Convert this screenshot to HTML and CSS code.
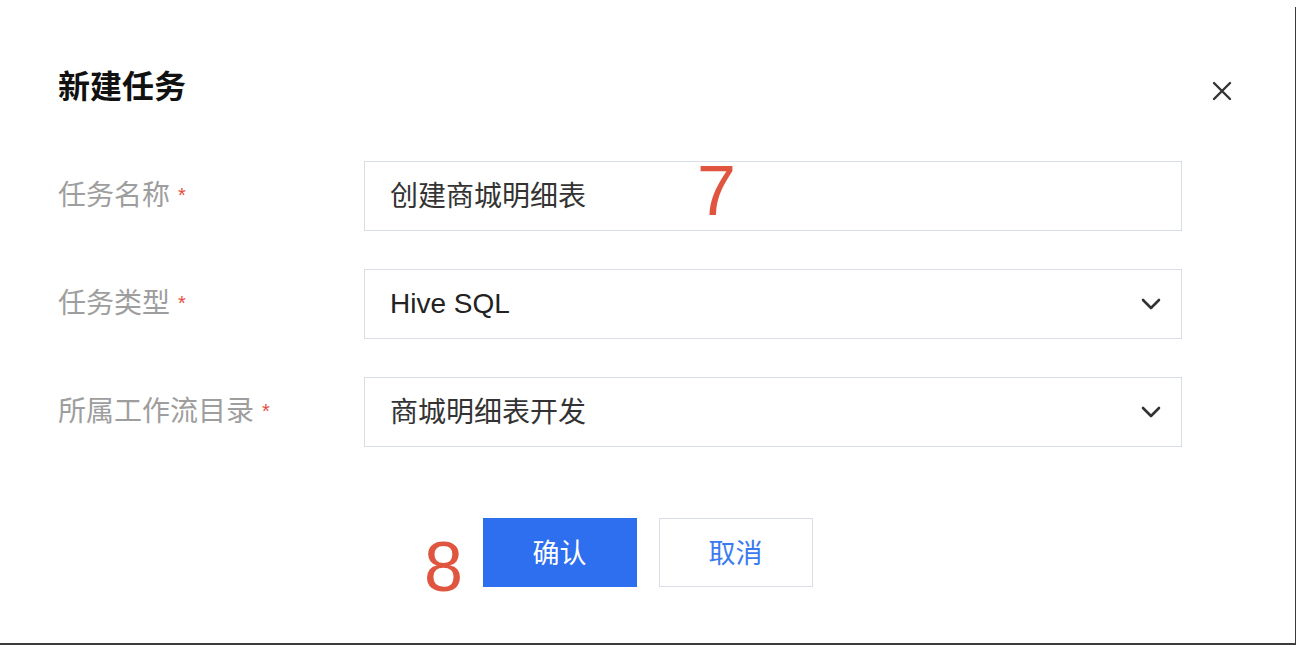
FILE: index.html
```html
<!DOCTYPE html>
<html lang="zh-CN">
<head>
    <meta charset="UTF-8">
    <meta name="viewport" content="width=device-width, initial-scale=1.0">
    <title>新建任务</title>
    <link rel="stylesheet" href="styles.css">
</head>
<body>
    <div class="frame">
        <div class="dialog-header">
            <h2 class="dialog-title">新建任务</h2>
            <svg class="close-icon" width="20" height="20" viewBox="0 0 20 20">
                <path d="M2 2 L18 18 M18 2 L2 18" stroke="#333" stroke-width="2.4" stroke-linecap="round" fill="none"/>
            </svg>
        </div>
        <form class="task-form">
            <div class="form-row">
                <label class="form-label">任务名称<span class="required">*</span></label>
                <div class="field">
                    <span class="field-value">创建商城明细表</span>
                    <span class="mark mark-seven">7</span>
                </div>
            </div>
            <div class="form-row">
                <label class="form-label">任务类型<span class="required">*</span></label>
                <div class="field">
                    <span class="field-value latin">Hive SQL</span>
                    <svg class="chevron" width="20" height="12" viewBox="0 0 20 12">
                        <path d="M2 2 L10 10 L18 2" stroke="#333" stroke-width="2.6" stroke-linecap="round" stroke-linejoin="round" fill="none"/>
                    </svg>
                </div>
            </div>
            <div class="form-row">
                <label class="form-label">所属工作流目录<span class="required">*</span></label>
                <div class="field">
                    <span class="field-value">商城明细表开发</span>
                    <svg class="chevron" width="20" height="12" viewBox="0 0 20 12">
                        <path d="M2 2 L10 10 L18 2" stroke="#333" stroke-width="2.6" stroke-linecap="round" stroke-linejoin="round" fill="none"/>
                    </svg>
                </div>
            </div>
        </form>
        <div class="dialog-footer">
            <span class="mark mark-eight">8</span>
            <button type="button" class="btn btn-primary">确认</button>
            <button type="button" class="btn btn-default">取消</button>
        </div>
    </div>
</body>
</html>
```

FILE: styles.css
```css
body {
  margin: 0;
  background: #fff;
  font-family: "Liberation Sans", "Noto Sans CJK SC", sans-serif;
}
.frame {
  position: relative;
  box-sizing: border-box;
  width: 1296px;
  height: 638px;
  margin-top: 7px;
  border-right: 1px solid #3a3a3a;
  border-bottom: 2px solid #3c3c3c;
  background: #fff;
}
.dialog-header {
  display: flex;
  justify-content: space-between;
  align-items: center;
  height: 40px;
  padding: 60px 63px 0 58px;
}
.dialog-title {
  margin: 0;
  font-size: 32px;
  line-height: 40px;
  font-weight: bold;
  color: #111;
}
.close-icon {
  margin-top: 8px;
}
.task-form {
  display: flex;
  flex-direction: column;
  gap: 38px;
  margin-top: 54px;
  padding-left: 58px;
}
.form-row {
  display: flex;
  align-items: center;
  height: 70px;
}
.form-label {
  width: 306px;
  padding-bottom: 6px;
  font-size: 28px;
  color: #9e9e9e;
}
.required {
  margin-left: 8px;
  font-size: 20px;
  color: #e54d42;
  vertical-align: 3px;
}
.field {
  position: relative;
  box-sizing: border-box;
  display: flex;
  align-items: center;
  justify-content: space-between;
  width: 818px;
  height: 70px;
  padding: 0 20px 0 25px;
  border: 1px solid #d9dde6;
}
.field-value {
  padding-bottom: 4px;
  font-size: 28px;
  color: #333;
}
.field-value.latin {
  padding-bottom: 0;
  color: #222;
}
.mark {
  position: absolute;
  font-size: 70px;
  line-height: 1;
  color: #e0553f;
}
.mark-seven {
  left: 332px;
  top: -6px;
}
.dialog-footer {
  position: relative;
  display: flex;
  justify-content: center;
  gap: 22px;
  margin-top: 71px;
}
.mark-eight {
  left: 424px;
  top: 14px;
}
.btn {
  box-sizing: border-box;
  width: 154px;
  height: 69px;
  padding-bottom: 4px;
  font-family: "Noto Sans CJK SC", sans-serif;
  font-size: 27px;
  cursor: pointer;
}
.btn-primary {
  background-color: #2e6ff0;
  color: #fff;
  border: 1px solid #2e6ff0;
}
.btn-default {
  background-color: #fff;
  color: #3b7bf0;
  border: 1px solid #d9dde6;
}
```
